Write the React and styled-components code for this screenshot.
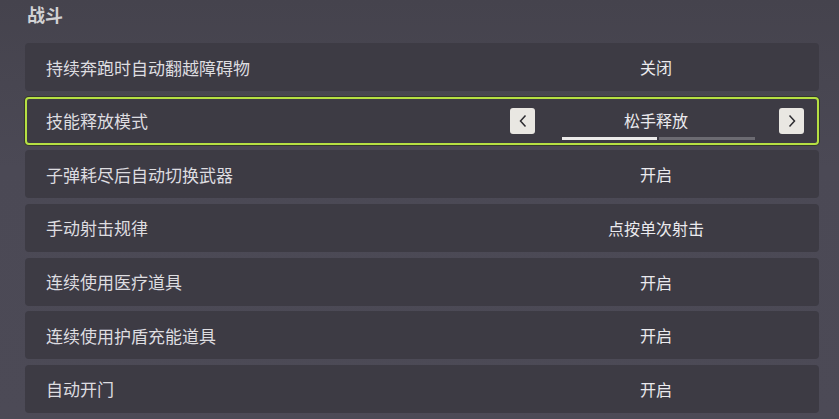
import React from 'react'
import styled, { createGlobalStyle } from 'styled-components'

const GlobalStyle = createGlobalStyle`
  html, body {
    margin: 0;
    padding: 0;
    background: #4a4853;
  }
  body {
    font-family: "Noto Sans CJK SC", "Noto Sans", sans-serif;
  }
`

const Page = styled.div`
  width: 839px;
  height: 419px;
  box-sizing: border-box;
  padding: 0 20px 0 25px;
  background: linear-gradient(180deg, #45434d 0%, #4b4955 40%, #4c4a56 100%);
  overflow: hidden;
`

const Title = styled.div`
  height: 43px;
  line-height: 28px;
  padding-left: 2px;
  font-size: 18px;
  font-weight: bold;
  color: #d2d2d4;
`

const List = styled.div`
  display: flex;
  flex-direction: column;
  gap: 5.67px;
`

const Row = styled.div`
  height: 48px;
  box-sizing: border-box;
  display: grid;
  grid-template-columns: 1fr 294px;
  align-items: center;
  padding: 0 15px 0 21px;
  background: #3d3b44;
  border-radius: 4px;
  border: ${p => (p.$active ? '2px solid #b6e043' : 'none')};
  box-shadow: ${p => (p.$active ? '0 0 0 1px rgba(40, 48, 20, 0.6)' : 'none')};
  ${p => p.$active && 'padding: 0 13px 0 19px;'}
`

const Label = styled.div`
  font-size: 17px;
  color: #dedde0;
  white-space: nowrap;
`

const ValueCell = styled.div`
  position: relative;
  height: 100%;
  display: flex;
  align-items: center;
  justify-content: space-between;
`

const Value = styled.div`
  flex: 1;
  text-align: center;
  font-size: 16px;
  color: #ebeaee;
  padding-right: 2px;
  padding-bottom: ${p => (p.$withBar ? '1px' : '0')};
`

const ArrowButton = styled.div`
  width: 25px;
  height: 26px;
  border-radius: 3px;
  background: #e9e7e2;
  display: flex;
  align-items: center;
  justify-content: center;
  flex-shrink: 0;
`

const Bar = styled.div`
  position: absolute;
  left: 52px;
  bottom: 3px;
  display: flex;
  gap: 2px;
`

const Segment = styled.div`
  width: ${p => p.$w}px;
  height: 3px;
  background: ${p => (p.$on ? '#ecebea' : '#6c6b72')};
`

const Chevron = ({ dir }) => (
  <svg width="10" height="14" viewBox="0 0 10 14">
    <path
      d={dir === 'left' ? 'M7.5 1.5 L2.5 7 L7.5 12.5' : 'M2.5 1.5 L7.5 7 L2.5 12.5'}
      fill="none"
      stroke="#2c2b30"
      strokeWidth="1.5"
    />
  </svg>
)

const rows = [
  { label: '持续奔跑时自动翻越障碍物', value: '关闭' },
  { label: '技能释放模式', value: '松手释放', active: true },
  { label: '子弹耗尽后自动切换武器', value: '开启' },
  { label: '手动射击规律', value: '点按单次射击' },
  { label: '连续使用医疗道具', value: '开启' },
  { label: '连续使用护盾充能道具', value: '开启' },
  { label: '自动开门', value: '开启' },
]

const App = () => {
  return (
    <Page>
      <GlobalStyle />
      <Title>战斗</Title>
      <List>
        {rows.map(r => (
          <Row key={r.label} $active={r.active}>
            <Label>{r.label}</Label>
            <ValueCell>
              {r.active && (
                <ArrowButton>
                  <Chevron dir="left" />
                </ArrowButton>
              )}
              <Value $withBar={r.active}>{r.value}</Value>
              {r.active && (
                <ArrowButton>
                  <Chevron dir="right" />
                </ArrowButton>
              )}
              {r.active && (
                <Bar>
                  <Segment $on $w={95} />
                  <Segment $w={96} />
                </Bar>
              )}
            </ValueCell>
          </Row>
        ))}
      </List>
    </Page>
  )
}

export default App
